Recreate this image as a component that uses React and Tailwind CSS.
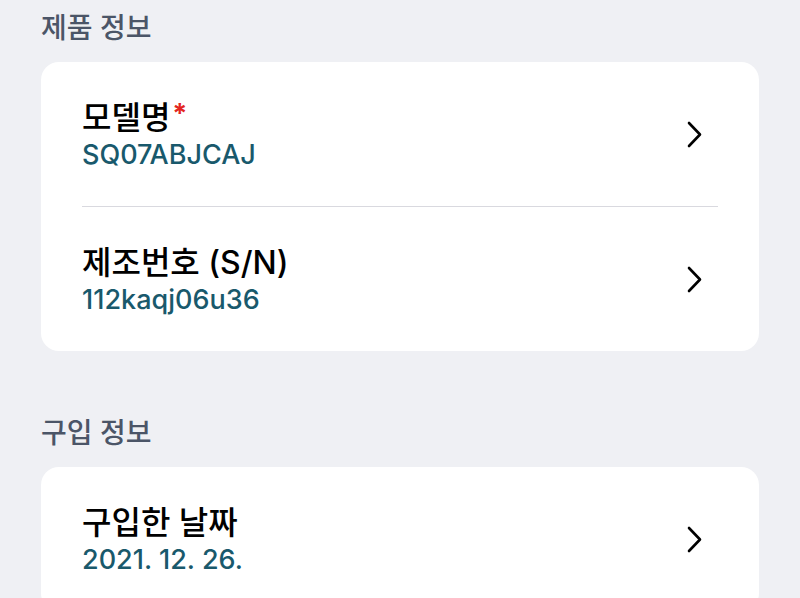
const ChevronRight = () => (
  <svg width="15" height="27" viewBox="0 0 15 27" fill="none" className="shrink-0">
    <polyline points="2,2 13,13.5 2,25" stroke="#000" strokeWidth="2.6" strokeLinecap="round" strokeLinejoin="round" />
  </svg>
);

function Row({ title, value, required, divider }) {
  return (
    <div className={divider ? "mx-[41px] border-t border-[#d9d9df]" : "mx-[41px]"}>
      <div className="flex h-[144px] items-center justify-between">
        <div className="flex flex-col">
          <div className="flex items-start text-[32px] leading-[38px] font-medium text-black">
            <span>{title}</span>
            {required && <span className="ml-[2px] text-[27px] leading-[30px] font-bold text-[#e3261f]">*</span>}
          </div>
          <div className="mt-[3px] text-[27px] leading-[30px] font-medium text-[#19596c]">{value}</div>
        </div>
        <div className="mr-[16px]">
          <ChevronRight />
        </div>
      </div>
    </div>
  );
}

export default function App() {
  return (
    <div
      className="h-[598px] overflow-hidden bg-[#eff0f4] px-[41px]"
      style={{ fontFamily: 'Inter, "Noto Sans CJK KR", sans-serif' }}
    >
      <h2 className="pt-[9px] pb-[15px] text-[28px] leading-[38px] font-medium text-[#4b5567]">제품 정보</h2>
      <div className="rounded-[18px] bg-white">
        <Row title="모델명" value="SQ07ABJCAJ" required />
        <Row title="제조번호 (S/N)" value="112kaqj06u36" divider />
      </div>

      <h2 className="pt-[63px] pb-[15px] text-[28px] leading-[38px] font-medium text-[#4b5567]">구입 정보</h2>
      <div className="rounded-[18px] bg-white">
        <Row title="구입한 날짜" value="2021. 12. 26." />
      </div>
    </div>
  );
}
